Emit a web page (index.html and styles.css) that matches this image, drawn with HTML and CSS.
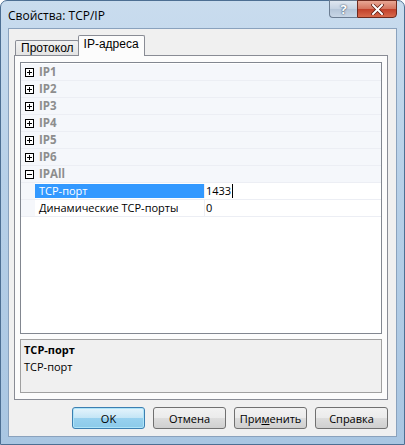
FILE: index.html
```html
<!DOCTYPE html>
<html lang="ru">
<head>
    <meta charset="UTF-8">
    <title>Свойства: TCP/IP</title>
    <link rel="stylesheet" href="styles.css">
</head>
<body>
    <div class="window">
        <div class="titlebar">
            <span class="title">Свойства: TCP/IP</span>
            <div class="caption-buttons">
                <span class="cap-btn help">?</span>
                <span class="cap-btn close">
                    <svg width="13" height="11" viewBox="0 0 13 11">
                        <path d="M2 1 L11 10 M11 1 L2 10" stroke="#5a1a10" stroke-width="3.4" stroke-linecap="square"/>
                        <path d="M2 1 L11 10 M11 1 L2 10" stroke="#fff" stroke-width="2" stroke-linecap="square"/>
                    </svg>
                </span>
            </div>
        </div>
        <div class="client">
            <div class="tabs">
                <span class="tab">Протокол</span>
                <span class="tab active">IP-адреса</span>
            </div>
            <div class="tab-panel">
                <div class="grid">
                    <div class="row cat"><span class="gutter"><svg class="box" width="9" height="9" viewBox="0 0 9 9"><rect x="0.5" y="0.5" width="8" height="8" fill="#fff" stroke="#000"/><path d="M2 4.5 H7 M4.5 2 V7" stroke="#000"/></svg></span><span class="cat-name">IP1</span></div>
                    <div class="row cat"><span class="gutter"><svg class="box" width="9" height="9" viewBox="0 0 9 9"><rect x="0.5" y="0.5" width="8" height="8" fill="#fff" stroke="#000"/><path d="M2 4.5 H7 M4.5 2 V7" stroke="#000"/></svg></span><span class="cat-name">IP2</span></div>
                    <div class="row cat"><span class="gutter"><svg class="box" width="9" height="9" viewBox="0 0 9 9"><rect x="0.5" y="0.5" width="8" height="8" fill="#fff" stroke="#000"/><path d="M2 4.5 H7 M4.5 2 V7" stroke="#000"/></svg></span><span class="cat-name">IP3</span></div>
                    <div class="row cat"><span class="gutter"><svg class="box" width="9" height="9" viewBox="0 0 9 9"><rect x="0.5" y="0.5" width="8" height="8" fill="#fff" stroke="#000"/><path d="M2 4.5 H7 M4.5 2 V7" stroke="#000"/></svg></span><span class="cat-name">IP4</span></div>
                    <div class="row cat"><span class="gutter"><svg class="box" width="9" height="9" viewBox="0 0 9 9"><rect x="0.5" y="0.5" width="8" height="8" fill="#fff" stroke="#000"/><path d="M2 4.5 H7 M4.5 2 V7" stroke="#000"/></svg></span><span class="cat-name">IP5</span></div>
                    <div class="row cat"><span class="gutter"><svg class="box" width="9" height="9" viewBox="0 0 9 9"><rect x="0.5" y="0.5" width="8" height="8" fill="#fff" stroke="#000"/><path d="M2 4.5 H7 M4.5 2 V7" stroke="#000"/></svg></span><span class="cat-name">IP6</span></div>
                    <div class="row cat"><span class="gutter"><svg class="box" width="9" height="9" viewBox="0 0 9 9"><rect x="0.5" y="0.5" width="8" height="8" fill="#fff" stroke="#000"/><path d="M2 4.5 H7" stroke="#000"/></svg></span><span class="cat-name">IPAll</span></div>
                    <div class="row prop">
                        <span class="gutter"></span>
                        <span class="name selected">TCP-порт</span>
                        <span class="value">1433<span class="caret"></span></span>
                    </div>
                    <div class="row prop">
                        <span class="gutter"></span>
                        <span class="name">Динамические TCP-порты</span>
                        <span class="value">0</span>
                    </div>
                </div>
                <div class="description">
                    <div class="desc-title">TCP-порт</div>
                    <div class="desc-text">TCP-порт</div>
                </div>
            </div>
            <div class="buttons">
                <button class="btn default">OK</button>
                <button class="btn">Отмена</button>
                <button class="btn">При<u>м</u>енить</button>
                <button class="btn">Справка</button>
            </div>
        </div>
    </div>
</body>
</html>
```

FILE: styles.css
```css
body {
    margin: 0;
    background: #ffffff;
    font-family: "Open Sans", "DejaVu Sans", sans-serif;
    font-size: 11px;
    color: #000;
}
.window {
    width: 405px;
    height: 445px;
    box-sizing: border-box;
    border: 1px solid #4d6f93;
    border-radius: 7px 7px 0 0;
    background: linear-gradient(to bottom, #c9dcee 0%, #b7d0e8 40%, #a9c6e2 100%);
    display: flex;
    flex-direction: column;
}
.titlebar {
    height: 27px;
    display: flex;
    justify-content: space-between;
    align-items: flex-start;
    padding-left: 7px;
}
.title {
    font-size: 12px;
    margin-top: 6px;
    color: #000;
}
.caption-buttons {
    display: flex;
    margin-right: 7px;
    margin-top: -1px;
}
.cap-btn {
    height: 18px;
    display: flex;
    align-items: center;
    justify-content: center;
    border: 1px solid #6b7d92;
    box-sizing: border-box;
}
.help {
    width: 28px;
    border-radius: 0 0 0 4px;
    border-right: none;
    background: linear-gradient(to bottom, #dfe7f0 0%, #c4d2e2 50%, #b4c5d8 51%, #c8d6e6 100%);
    color: #fff;
    font-weight: bold;
    font-size: 13px;
    text-shadow: 0 0 2px #40556e, 0 0 1px #40556e;
}
.close {
    width: 40px;
    border-radius: 0 0 4px 0;
    border-color: #6e2a1e;
    background: linear-gradient(to bottom, #e8a795 0%, #d4735d 50%, #c1402a 51%, #d86a4c 100%);
}
.client {
    flex: 1;
    margin: 0 7px 7px 7px;
    background: #f0f0f0;
    border: 1px solid #8aa2bd;
    display: flex;
    flex-direction: column;
    padding: 7px 8px 0 5px;
}
.tabs {
    display: flex;
    align-items: flex-end;
    height: 19px;
    padding-left: 1px;
    position: relative;
    z-index: 1;
}
.tab {
    height: 14px;
    padding: 0 4px 0 5px;
    border: 1px solid #898c95;
    border-bottom: none;
    border-radius: 2px 2px 0 0;
    background: linear-gradient(to bottom, #f2f2f2, #e3e3e3);
    font-family: "Liberation Sans", Arial, sans-serif;
    font-size: 12px;
    line-height: 15px;
}
.tab.active {
    height: 20px;
    line-height: 17px;
    padding: 0 5px 0 5px;
    background: #fcfcfc;
    margin-left: -1px;
    margin-bottom: -1px;
}
.tab-panel {
    height: 345px;
    box-sizing: border-box;
    border: 1px solid #898c95;
    background: #fcfcfc;
    padding: 6px 5px 6px 5px;
    display: flex;
    flex-direction: column;
    gap: 5px;
}
.grid {
    height: 272px;
    box-sizing: border-box;
    border: 1px solid #828790;
    background: #ffffff;
    padding-top: 1px;
}
.row {
    display: flex;
    height: 16px;
    border-bottom: 1px solid #eceef4;
    line-height: 16px;
}
.cat {
    background: #f5f7fb;
}
.gutter {
    width: 14px;
    flex-shrink: 0;
    background: #f5f7fb;
    display: flex;
    align-items: center;
    justify-content: center;
}
.box {
    display: block;
    margin-left: 2px;
}
.cat-name {
    padding-left: 4px;
    color: #8d8d8d;
    font-weight: bold;
    font-size: 11.5px;
}
.name {
    width: 170px;
    padding-left: 4px;
    box-sizing: border-box;
    border-right: 1px solid #eceef4;
}
.name.selected {
    background: #3399ff;
    color: #fff;
    margin: 1px 0;
    line-height: 14px;
}
.value {
    flex: 1;
    padding-left: 1px;
    display: flex;
    align-items: center;
}
.caret {
    width: 1px;
    height: 14px;
    background: #000;
    margin-left: 1px;
}
.description {
    flex: 1;
    border: 1px solid #a0a0a0;
    background: #f0f0f0;
    padding: 2px 3px;
}
.desc-title {
    font-weight: bold;
    line-height: 16px;
}
.desc-text {
    line-height: 18px;
}
.buttons {
    display: flex;
    justify-content: flex-end;
    gap: 8px;
    margin-top: 7px;
    padding-right: 0;
}
.btn {
    width: 73px;
    height: 22px;
    font-family: "Open Sans", "DejaVu Sans", sans-serif;
    font-size: 11px;
    color: #000;
    border: 1px solid #707070;
    border-radius: 3px;
    background: linear-gradient(to bottom, #f2f2f2 0%, #ebebeb 50%, #dddddd 51%, #cfcfcf 100%);
    padding: 0;
}
.btn.default {
    border-color: #3c7fb1;
    box-shadow: inset 0 0 0 1px #aee4f9;
    background: linear-gradient(to bottom, #e5f4fc 0%, #c4e5f6 50%, #98d1ef 51%, #8ccae9 100%);
}
```
